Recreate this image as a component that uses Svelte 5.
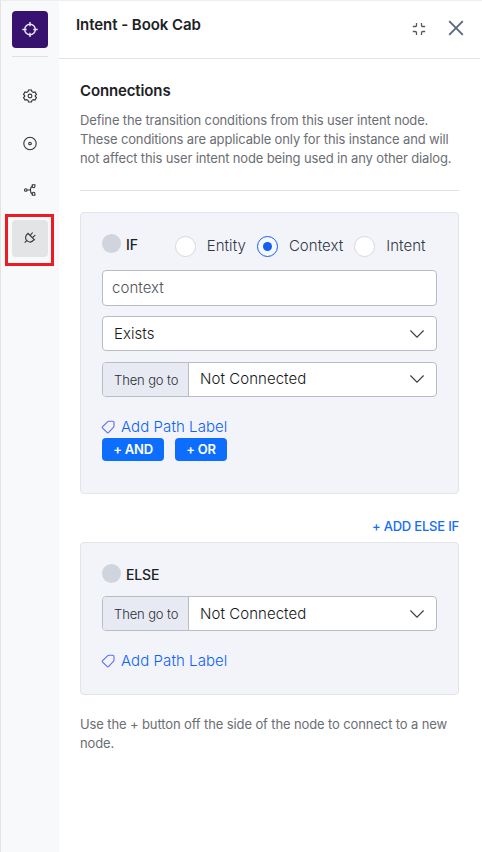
<script>
  let target = $state('Context');
  const targets = ['Entity', 'Context', 'Intent'];
</script>

{#snippet chevron()}
  <svg class="chevron" width="16" height="10" viewBox="0 0 16 10"><path d="M1.400 1.500 8 8.100l6.600-6.600" /></svg>
{/snippet}

{#snippet goTo()}
  <div class="select group">
    <span class="prefix">Then go to</span>
    <span class="value">Not Connected</span>
    {@render chevron()}
  </div>
{/snippet}

{#snippet pathLabel()}
  <div class="path">
    <svg width="14" height="14" viewBox="0 0 14 14"><path d="M7.400 1.200h3.700c.9 0 1.400.5 1.400 1.300v3.600c0 .6-.2.9-.6 1.300L7.200 12.400c-.6.6-1.100.6-1.700 0L1.100 8.100c-.5-.5-.5-.9 0-1.400L6 1.800c.4-.4.8-.6 1.400-.6z" /></svg>
    <span>Add Path Label</span>
  </div>
{/snippet}

<div class="panel">
  <nav>
    <div class="logo">
      <svg width="16" height="16" viewBox="0 0 16 16"><circle cx="8" cy="7.500" r="5.300" /><path d="M8 0v4.200M8 10.800V15M.3 7.500h4.400M11.300 7.500h4.400" /></svg>
    </div>
    <hr />
    <button aria-label="Settings">
      <svg width="16" height="16" viewBox="0 0 16 16"><circle cx="8" cy="8" r="1.900" /><path d="M6.500 2h3l.5 1.600 1.300.8 1.700-.5 1.500 2.500-1.200 1.200v.8l1.200 1.200-1.500 2.500-1.700-.5-1.300.8-.5 1.600h-3L6 12.400l-1.300-.8-1.700.5-1.500-2.500 1.200-1.200v-.8L1.500 6.400 3 3.900l1.700.5L6 3.600z" /></svg>
    </button>
    <button aria-label="Instance">
      <svg width="16" height="16" viewBox="0 0 16 16"><circle cx="8" cy="8.500" r="6.200" /><circle cx="8" cy="8.500" r="1.300" /></svg>
    </button>
    <button aria-label="Flow">
      <svg width="16" height="16" viewBox="0 0 16 16"><circle cx="3.800" cy="8" r="1.300" /><path d="M5.200 8h3.400M10.200 12c-1.100-.7-1.800-2.200-1.800-4s.7-3.300 1.800-4M10.300 2.700h2.600v1.600c0 .9-.5 1.400-1.300 1.400s-1.300-.5-1.300-1.400zM10.300 13.300h2.600v-1.600c0-.9-.5-1.400-1.300-1.400s-1.300.5-1.300 1.400z" /></svg>
    </button>
    <button class="active" aria-label="Connections">
      <svg width="16" height="16" viewBox="0 0 16 16"><path d="M5.600 3l7.200 7.200M6 3.500C3.500 5.200 2.900 7.900 4.300 9.800l1.300 1.300c1.800 1.400 4.500 1 6.500-1.400M8.200 5.500l2.400-3M10.400 7.700l2.900-2.500M4.700 10.700l-2 2" /></svg>
      <span class="marker"></span>
    </button>
  </nav>

  <main>
    <header>
      <h1>Intent - Book Cab</h1>
      <svg class="shrink" width="14" height="14" viewBox="0 0 14 14"><path d="M4.500 1v2.200c0 .9-.4 1.300-1.300 1.300H.8M9.500 1v2.200c0 .9.4 1.300 1.300 1.300h2.400M4.500 13v-2.200c0-.9-.4-1.300-1.300-1.300H.8M9.500 13v-2.200c0-.9.4-1.300 1.300-1.300h2.400" /></svg>
      <svg class="close" width="16" height="16" viewBox="0 0 16 16"><path d="M1.200 1.200l13.600 13.600M14.800 1.200 1.200 14.800" /></svg>
    </header>

    <div class="content">
      <h2>Connections</h2>
      <p>Define the transition conditions from this user intent node.<br />These conditions are applicable only for this instance and will<br />not affect this user intent node being used in any other dialog.</p>
      <hr />

      <section class="if">
        <div class="head">
          <i class="dot"></i><b>IF</b>
          <div class="radios">
            {#each targets as name}
              <button class="radio" class:on={target === name} onclick={() => (target = name)}>
                <i></i><span>{name}</span>
              </button>
            {/each}
          </div>
        </div>
        <div class="input">context</div>
        <div class="select exists"><span class="value">Exists</span>{@render chevron()}</div>
        {@render goTo()}
        {@render pathLabel()}
        <div class="ops"><button class="and">+ AND</button><button class="or">+ OR</button></div>
      </section>

      <div class="elseif">+ ADD ELSE IF</div>

      <section class="else">
        <div class="head"><i class="dot"></i><b>ELSE</b></div>
        {@render goTo()}
        {@render pathLabel()}
      </section>

      <p class="foot">Use the + button off the side of the node to connect to a new<br />node.</p>
    </div>
  </main>
</div>

<style>
  * { box-sizing: border-box; }
  .panel {
    display: flex; width: 482px; height: 852px; overflow: hidden; background: #fff;
    border-top: 1px solid #eeeeef; border-left: 1px solid #e3e4e7;
    font-family: Inter, "Liberation Sans", sans-serif; color: #202124; white-space: nowrap;
  }
  svg { fill: none; display: block; flex: none; }
  button { font: inherit; border: 0; padding: 0; background: none; display: flex; align-items: center; }
  h1, h2, p { margin: 0; }
  hr { border: 0; height: 1px; margin: 0; background: #dfe1e4; }

  nav { width: 58px; flex: none; background: #f8f9fb; display: flex; flex-direction: column; align-items: center; padding-top: 10px; }
  .logo { width: 36px; height: 37px; border-radius: 4px; background: #37126f; display: flex; align-items: center; justify-content: center; }
  .logo svg { stroke: #eee9f5; stroke-width: 1.4; }
  nav hr { width: 36px; margin: 8px 0 20px; }
  nav button { width: 36px; height: 37px; margin-bottom: 10px; justify-content: center; border-radius: 4px; position: relative; }
  nav button svg { stroke: #30343b; stroke-width: 1.1; }
  nav .active { background: #e3e4e6; margin-top: 2px; }
  .active svg { margin-top: -2px; }
  .marker { position: absolute; left: -7px; top: -6px; width: 49px; height: 52px; border: 3px solid #ed1c24; }

  main { flex: 1; min-width: 0; }
  header { height: 58px; width: 421px; border-bottom: 1px solid #e2e3e6; padding: 0 16px 0 17px; display: flex; align-items: center; }
  h1 { flex: 1; font-size: 15px; line-height: 20px; font-weight: 600; margin-top: -9px; letter-spacing: -0.06px; }
  .shrink { stroke: #55585f; stroke-width: 1.3; margin-right: 22px; margin-top: -1px; }
  .close { stroke: #5b6880; stroke-width: 1.9; margin-top: -3px; }

  .content { width: 400px; padding: 22px 0 0 21px; }
  h2 { font-size: 15px; line-height: 20px; font-weight: 600; letter-spacing: -0.13px; }
  p { font-size: 13px; line-height: 19px; color: #6b6e73; margin-top: 10px; letter-spacing: -0.14px; }
  .content > hr { margin: 22px 0 21px; }
  section { width: 379px; border: 1px solid #e2e4e8; border-radius: 4px; background: #f3f4f9; padding: 0 21px; }
  .if { height: 282px; }
  .else { height: 153px; }
  .head { display: flex; height: 57px; padding-top: 21px; }
  .else .head { height: 53px; }
  .dot { width: 19px; height: 19px; border-radius: 50%; background: #d0d4dd; margin-right: 5px; }
  b { font-size: 14px; line-height: 21px; font-weight: 500; letter-spacing: -0.15px; }
  .radios { display: flex; margin-left: 37px; height: 25px; }
  .radio { color: #303846; font-size: 15px; font-weight: 300; height: 25px; letter-spacing: 0.04px; }
  .radio span { margin-top: -2px; }
  .radio i { width: 21px; height: 21px; border: 1px solid #d4d8df; border-radius: 50%; background: #fff; margin-right: 11px; display: flex; align-items: center; justify-content: center; }
  .radio + .radio { margin-left: 11px; }
  .radio.on i { border-color: #155eef; background: #f5f9ff; }
  .radio.on i::after { content: ""; width: 9px; height: 9px; border-radius: 50%; background: #155eef; }

  .input, .select { width: 335px; border: 1px solid #b9bcc3; border-radius: 4px; background: #fff; font-size: 15px; font-weight: 300; display: flex; align-items: center; }
  .input { height: 36px; padding: 0 0 2px 9px; color: #4f535a; letter-spacing: 0.05px; }
  .select { height: 35px; padding-right: 11px; color: #15171a; }
  .exists { margin: 10px 0 11px; padding-left: 11px; }
  .value { flex: 1; letter-spacing: 0.06px; }
  .if .group .value { margin-top: -2px; }
  .prefix { width: 86px; height: 33px; flex: none; background: #e7eaf2; border-right: 1px solid #b9bcc3; border-radius: 3px 0 0 3px; font-size: 13px; letter-spacing: -0.12px; display: flex; align-items: center; padding-left: 11px; margin-right: 11px; color: #2a2d34; }
  .chevron { stroke: #343a40; stroke-width: 1.1; }
  .if .group .chevron { margin-top: -2px; }
  .path { display: flex; align-items: center; height: 20px; margin-top: 20px; color: #0d62fa; font-size: 15px; font-weight: 300; letter-spacing: 0.07px; }
  .path svg { stroke: #5c6df5; stroke-width: 1.1; margin: 0 5px 0 -1px; width: 15px; }
  .path span { margin-top: -2px; }
  .ops { display: flex; gap: 11px; margin-top: 1px; }
  .ops button { height: 23px; padding-bottom: 1px; border-radius: 4px; background: #0d6efd; color: #fff; font-size: 13px; font-weight: 600; letter-spacing: -0.2px; justify-content: center; }
  .and { width: 62px; }
  .or { width: 52px; }
  .elseif { height: 48px; width: 379px; padding-top: 24px; text-align: right; font-size: 13px; line-height: 17px; font-weight: 500; letter-spacing: -0.2px; color: #146cfa; }
  .foot { margin-top: 20px; letter-spacing: -0.12px; }
</style>
